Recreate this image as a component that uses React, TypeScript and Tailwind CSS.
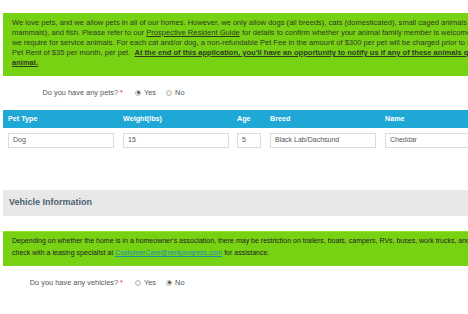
import React from "react";

const geo = { fontFamily: "'Liberation Sans', Arial, sans-serif" };

function Radio({ checked }: { checked: boolean }) {
  return (
    <span className="inline-flex items-center justify-center w-[6px] h-[6px] rounded-full border border-[#b8b8b8] bg-[#f4f4f4]">
      {checked && <span className="w-[3px] h-[3px] rounded-full bg-[#555]" />}
    </span>
  );
}

function YesNo({ label, yes }: { label: string; yes: boolean }) {
  return (
    <div className="flex items-center h-[12px] text-[7.4px] text-[#555]">
      <div className="w-[124px] flex justify-end pr-[4px]">
        <span>{label}</span>
        <span className="text-[#d33] ml-[2px]">*</span>
      </div>
      <div className="flex items-center gap-[3px] ml-[8px]">
        <Radio checked={yes} />
        <span>Yes</span>
      </div>
      <div className="flex items-center gap-[3px] ml-[10px]">
        <Radio checked={!yes} />
        <span>No</span>
      </div>
    </div>
  );
}

function Input({ value, w }: { value: string; w: string }) {
  return (
    <div className={`${w} h-[15px] border border-[#d5dde5] bg-white flex items-center px-[4px] text-[7px] text-[#555]`}>
      {value}
    </div>
  );
}

export default function App() {
  return (
    <div className="w-[468px] h-[314px] overflow-hidden bg-white" style={geo}>
      <div className="w-[560px] pl-[3px] pt-[13px]">
        <div className="bg-[#78d214] h-[63px] pl-[9px] pt-[5px] text-[7.55px] leading-[10px] text-[#2f3a22] whitespace-nowrap">
          <div>We love pets, and we allow pets in all of our homes. However, we only allow dogs (all breeds), cats (domesticated), small caged animals (small</div>
          <div>
            mammals), and fish. Please refer to our <span className="underline">Prospective Resident Guide</span> for details to confirm whether your animal family member is welcome.
          </div>
          <div>we require for service animals. For each cat and/or dog, a non-refundable Pet Fee in the amount of $300 per pet will be charged prior to move-in, and</div>
          <div>
            Pet Rent of $35 per month, per pet.&nbsp;&nbsp;<span className="font-bold underline">At the end of this application, you'll have an opportunity to notify us if any of these animals qualify as a service</span>
          </div>
          <div className="font-bold underline">animal.</div>
        </div>

        <div className="mt-[11px]">
          <YesNo label="Do you have any pets?" yes={true} />
        </div>

        <div className="mt-[11px] bg-[#1fa7d6] h-[18px] flex items-center text-white font-bold text-[7.2px]">
          <div className="w-[115px] pl-[5px]">Pet Type</div>
          <div className="w-[114px] pl-[5px]">Weight(lbs)</div>
          <div className="w-[33px] pl-[5px]">Age</div>
          <div className="w-[115px] pl-[5px]">Breed</div>
          <div className="pl-[5px]">Name</div>
        </div>
        <div className="flex items-center pt-[5px]">
          <div className="w-[115px] pl-[5px]"><Input value="Dog" w="w-[106px]" /></div>
          <div className="w-[114px] pl-[5px]"><Input value="15" w="w-[106px]" /></div>
          <div className="w-[33px] pl-[5px]"><Input value="5" w="w-[24px]" /></div>
          <div className="w-[115px] pl-[5px]"><Input value="Black Lab/Dachsund" w="w-[106px]" /></div>
          <div className="pl-[5px]"><Input value="Cheddar" w="w-[106px]" /></div>
        </div>

        <div className="mt-[42px] bg-[#e8e8e8] h-[26px] flex items-center pl-[6px] text-[9px] font-bold text-[#4a6072]">
          Vehicle Information
        </div>

        <div className="mt-[15px] bg-[#78d214] border-t border-[#8fe02a] h-[35px] pl-[9px] pt-[3px] text-[7px] leading-[12px] text-[#222] whitespace-nowrap">
          <div>Depending on whether the home is in a homeowner's association, there may be restriction on trailers, boats, campers, RVs, buses, work trucks, and other vehicles. Please</div>
          <div>
            check with a leasing specialist at <span className="underline text-[#1a8bb3]">CustomerCare@rentprogress.com</span> for assistance.
          </div>
        </div>

        <div className="mt-[11px]">
          <YesNo label="Do you have any vehicles?" yes={false} />
        </div>
      </div>
    </div>
  );
}
